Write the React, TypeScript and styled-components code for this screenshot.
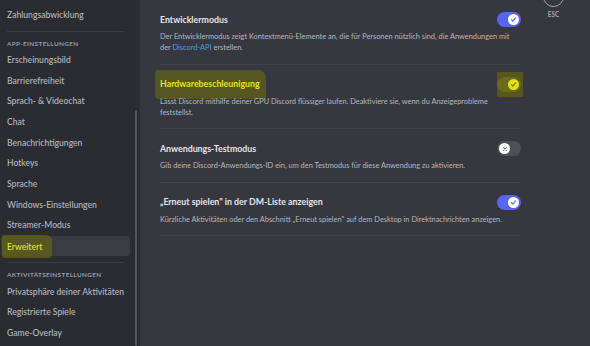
import React from 'react';
import styled, { createGlobalStyle } from 'styled-components';

const GlobalStyle = createGlobalStyle`
  html, body {
    margin: 0;
    padding: 0;
    background: #37373f;
  }
  body {
    font-family: 'Lato', 'Noto Sans', sans-serif;
    -webkit-font-smoothing: antialiased;
  }
`;

type NavEntry = { label: string; selected?: boolean };

const APP_ITEMS: NavEntry[] = [
  { label: 'Erscheinungsbild' },
  { label: 'Barrierefreiheit' },
  { label: 'Sprach- & Videochat' },
  { label: 'Chat' },
  { label: 'Benachrichtigungen' },
  { label: 'Hotkeys' },
  { label: 'Sprache' },
  { label: 'Windows-Einstellungen' },
  { label: 'Streamer-Modus' },
  { label: 'Erweitert', selected: true },
];

const ACTIVITY_ITEMS: NavEntry[] = [
  { label: 'Privatsphäre deiner Aktivitäten' },
  { label: 'Registrierte Spiele' },
  { label: 'Game-Overlay' },
];

const Check = ({ color }: { color: string }) => (
  <svg width="7" height="7" viewBox="0 0 20 20">
    <path d="M4 10.5l4 4 8-9" fill="none" stroke={color} strokeWidth="3.2" strokeLinecap="round" strokeLinejoin="round" />
  </svg>
);

const Cross = () => (
  <svg width="6" height="6" viewBox="0 0 20 20">
    <path d="M5 5l10 10M15 5L5 15" fill="none" stroke="#72767d" strokeWidth="3.4" strokeLinecap="round" />
  </svg>
);

const Toggle = ({ on, marked }: { on: boolean; marked?: boolean }) => (
  <ToggleMark $marked={marked}>
    <Track $on={on} $marked={marked}>
      <Knob $marked={marked}>
        {on ? <Check color={marked ? '#6f6f12' : '#5865f2'} /> : <Cross />}
      </Knob>
    </Track>
  </ToggleMark>
);

const App = () => {
  return (
    <>
      <GlobalStyle />
      <Page>
        <Sidebar>
          <NavList>
            <NavItem>Zahlungsabwicklung</NavItem>
            <Separator />
            <SectionHeader>App-Einstellungen</SectionHeader>
            {APP_ITEMS.map((item) => (
              <NavItem key={item.label} $selected={item.selected}>
                {item.selected ? <Marker>{item.label}</Marker> : item.label}
              </NavItem>
            ))}
            <Separator $top={6} />
            <SectionHeader>Aktivitätseinstellungen</SectionHeader>
            {ACTIVITY_ITEMS.map((item) => (
              <NavItem key={item.label}>{item.label}</NavItem>
            ))}
          </NavList>
          <ScrollTrack>
            <ScrollThumb />
          </ScrollTrack>
        </Sidebar>

        <Main>
          <Content>
            <Row>
              <RowHead>
                <Title>Entwicklermodus</Title>
                <Toggle on />
              </RowHead>
              <Description>
                Der Entwicklermodus zeigt Kontextmenü-Elemente an, die für Personen nützlich sind, die Anwendungen mit
                der <Link>Discord-API</Link> erstellen.
              </Description>
            </Row>
            <Row>
              <RowHead>
                <Title $marked>
                  <TitleMarker>Hardwarebeschleunigung</TitleMarker>
                </Title>
                <Toggle on marked />
              </RowHead>
              <Description>
                Lässt Discord mithilfe deiner GPU Discord flüssiger laufen. Deaktiviere sie, wenn du Anzeigeprobleme
                feststellst.
              </Description>
            </Row>
            <Row>
              <RowHead>
                <Title>Anwendungs-Testmodus</Title>
                <Toggle on={false} />
              </RowHead>
              <Description>
                Gib deine Discord-Anwendungs-ID ein, um den Testmodus für diese Anwendung zu aktivieren.
              </Description>
            </Row>
            <Row>
              <RowHead>
                <Title>„Erneut spielen" in der DM-Liste anzeigen</Title>
                <Toggle on />
              </RowHead>
              <Description>
                Kürzliche Aktivitäten oder den Abschnitt „Erneut spielen" auf dem Desktop in Direktnachrichten anzeigen.
              </Description>
            </Row>
          </Content>

          <Tools>
            <CloseCircle>
              <svg width="9" height="9" viewBox="0 0 20 20">
                <path d="M4 4l12 12M16 4L4 16" fill="none" stroke="#b5bac1" strokeWidth="2.4" strokeLinecap="round" />
              </svg>
            </CloseCircle>
            <EscLabel>ESC</EscLabel>
          </Tools>
        </Main>
      </Page>
    </>
  );
};

export default App;

const Page = styled.div`
  display: flex;
  width: 590px;
  height: 346px;
  overflow: hidden;
  background: #37373f;
`;

const Sidebar = styled.aside`
  display: flex;
  width: 140px;
  flex-shrink: 0;
  background: #2b2c31;
`;

const NavList = styled.nav`
  width: 130px;
  padding: 4.6px 0 0 1px;
  display: flex;
  flex-direction: column;
`;

const NavItem = styled.div<{ $selected?: boolean }>`
  height: 20.7px;
  display: flex;
  align-items: center;
  padding-left: 6px;
  border-radius: 3px;
  font-size: 8.6px;
  font-weight: 500;
  color: ${(p) => (p.$selected ? '#e8e62a' : '#b5bac1')};
  background: ${(p) => (p.$selected ? '#3a3c42' : 'transparent')};
  white-space: nowrap;
`;

const Marker = styled.span`
  margin-left: -5px;
  padding: 7px 10px 6px 5px;
  background: rgba(100, 100, 20, 0.72);
  border-radius: 2px 6px 4px 3px;
`;

const Separator = styled.div<{ $top?: number }>`
  height: 1px;
  margin: ${(p) => p.$top ?? 5.5}px 6px 0 6px;
  background: #3d3f45;
`;

const SectionHeader = styled.div`
  height: 17.8px;
  display: flex;
  align-items: flex-end;
  padding: 0 0 2.8px 6px;
  box-sizing: border-box;
  font-size: 6.4px;
  font-weight: 700;
  letter-spacing: 0.35px;
  text-transform: uppercase;
  color: #949ba4;
`;

const ScrollTrack = styled.div`
  width: 10px;
  display: flex;
  justify-content: center;
`;

const ScrollThumb = styled.div`
  width: 2px;
  margin: 110px 0 0 2px;
  background: #55575d;
  border-radius: 1px;
`;

const Main = styled.main`
  flex: 1;
  display: flex;
  padding-left: 20px;
`;

const Content = styled.div`
  width: 361px;
  flex-shrink: 0;
  display: flex;
  flex-direction: column;
`;

const Row = styled.section`
  padding: 13.5px 0 10.5px 0;
  border-bottom: 1px solid #42434b;
`;

const RowHead = styled.div`
  display: flex;
  align-items: center;
  justify-content: space-between;
  height: 12px;
`;

const Title = styled.h3<{ $marked?: boolean }>`
  margin: 0;
  font-size: 8.8px;
  font-weight: 700;
  line-height: 12px;
  color: ${(p) => (p.$marked ? '#e6e41c' : '#e3e5e8')};
`;

const TitleMarker = styled.span`
  display: inline-block;
  margin: -8px 0 -8px -5px;
  padding: 8px 6px 9px 5px;
  background: rgba(100, 100, 22, 0.7);
  border-radius: 3px 8px 2px 4px;
`;

const Description = styled.p`
  margin: 5.5px 0 0 0;
  font-size: 7.4px;
  line-height: 11px;
  color: #b5b8be;
`;

const Link = styled.span`
  color: #4a9de3;
`;

const ToggleMark = styled.div<{ $marked?: boolean }>`
  display: flex;
  padding: ${(p) => (p.$marked ? '5px 2px 5px 0' : '0')};
  margin: ${(p) => (p.$marked ? '-5px -2px -5px 0' : '0')};
  background: ${(p) => (p.$marked ? 'rgba(92, 92, 24, 0.85)' : 'transparent')};
`;

const Track = styled.div<{ $on: boolean; $marked?: boolean }>`
  width: 24px;
  height: 15px;
  box-sizing: border-box;
  padding: 2px;
  border-radius: 8px;
  display: flex;
  justify-content: ${(p) => (p.$on ? 'flex-end' : 'flex-start')};
  background: ${(p) => (p.$marked ? '#6a6a1c' : p.$on ? '#5865f2' : '#4e5058')};
`;

const Knob = styled.div<{ $marked?: boolean }>`
  width: 11px;
  height: 11px;
  border-radius: 50%;
  display: flex;
  align-items: center;
  justify-content: center;
  background: ${(p) => (p.$marked ? '#e4e20e' : '#ffffff')};
`;

const Tools = styled.div`
  margin-left: 22px;
  width: 21px;
  display: flex;
  flex-direction: column;
  align-items: center;
`;

const CloseCircle = styled.div`
  width: 21px;
  height: 21px;
  margin-top: -14px;
  box-sizing: border-box;
  border: 1.5px solid #a3a6ad;
  border-radius: 50%;
  display: flex;
  align-items: center;
  justify-content: center;
`;

const EscLabel = styled.div`
  margin-top: 4px;
  font-size: 6.5px;
  font-weight: 700;
  color: #a3a6ad;
`;
